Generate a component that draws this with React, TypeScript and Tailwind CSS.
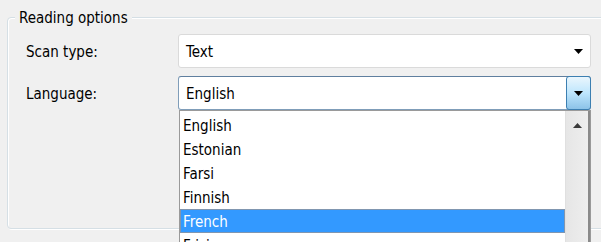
import React from "react";

const items = ["English", "Estonian", "Farsi", "Finnish", "French", "Frisian"];

function Arrow({ up = false }: { up?: boolean }) {
  return (
    <svg width="9" height="5" viewBox="0 0 9 5" className="block">
      {up ? <path d="M0 5 L4.5 0 L9 5 Z" fill="#3a3a3a" /> : <path d="M0 0 L9 0 L4.5 5 Z" fill="#000" />}
    </svg>
  );
}

export default function App() {
  return (
    <div className="w-[601px] h-[242px] bg-[#f0f0f0] overflow-hidden text-[15px] text-black font-['DejaVu_Sans_Condensed','Liberation_Sans',sans-serif] leading-[18px]">
      <div className="relative ml-[7px] mt-[17px] w-[650px] h-[212px] border border-[#d5dfe5] rounded-[4px] shadow-[inset_1px_1px_0_#ffffff,1px_1px_0_#ffffff] pt-[16px] pl-[18px]">
        <div className="absolute left-[7px] top-[-9px] bg-[#f0f0f0] px-[4px]">Reading options</div>
        <div className="grid grid-cols-[152px_413px] gap-y-[8px]">
          <div className="flex items-center pt-px">Scan type:</div>
          <div className="h-[34px] bg-white border border-[#dadada] rounded-[3px] flex items-center justify-between pl-[7px] pr-[7px]">
            <span className="pt-px">Text</span>
            <Arrow />
          </div>
          <div className="flex items-center pt-px">Language:</div>
          <div className="relative h-[34px]">
            <div className="h-full bg-white border border-[#7f9db9] border-t-[#5f7f9f] rounded-[3px] flex items-center">
              <span className="flex-1 pl-[7px] pt-px">English</span>
              <div className="w-[25px] h-[34px] -mr-px -my-px rounded-[3px] border border-[#3c7fb1] bg-gradient-to-b from-[#eaf6fd] via-[#bee6fd] to-[#8cc3e8] flex items-center justify-center">
                <Arrow />
              </div>
            </div>
            <div className="absolute left-[1px] top-[34px] w-[412px] h-[140px] bg-white border border-[#9a9a9a] flex">
              <div className="flex-1 flex flex-col pt-[2px]">
                {items.map((it) => (
                  <div
                    key={it}
                    className={
                      it === "French"
                        ? "h-[24px] shrink-0 flex items-center pl-[2px] pt-[2px] bg-[#3399ff] text-white border border-[#8096b0]"
                        : "h-[24px] shrink-0 flex items-center pl-[3px] pt-[2px]"
                    }
                  >
                    {it}
                  </div>
                ))}
              </div>
              <div className="w-[25px] bg-gradient-to-r from-[#e6e6e6] to-[#eeeeee] border-l border-[#e0e0e0] border-r-2 border-r-[#8a8a8a] flex justify-center pt-[12px]">
                <Arrow up />
              </div>
            </div>
          </div>
        </div>
      </div>
    </div>
  );
}
